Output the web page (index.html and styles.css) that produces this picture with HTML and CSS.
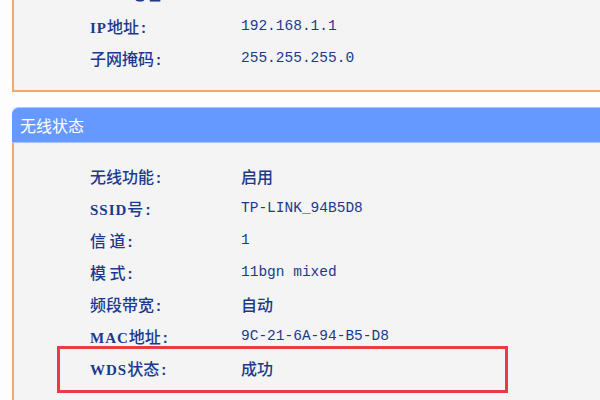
FILE: index.html
```html
<!DOCTYPE html>
<html lang="zh-CN">
<head>
<meta charset="utf-8">
<title>运行状态</title>
<link rel="stylesheet" href="styles.css">
</head>
<body>
<div class="page">
  <section class="panel panel-lan">
    <div class="row"><span class="label"><span class="lat">MAC</span>地址<span class="colon">:</span></span><span class="value mono">9C-21-6A-94-B5-D8</span></div>
    <div class="row"><span class="label"><span class="lat">IP</span>地址<span class="colon">:</span></span><span class="value mono">192.168.1.1</span></div>
    <div class="row"><span class="label">子网掩码<span class="colon">:</span></span><span class="value mono">255.255.255.0</span></div>
  </section>

  <section class="panel panel-wlan">
    <header class="panel-title">无线状态</header>
    <div class="panel-body">
      <div class="row"><span class="label">无线功能<span class="colon">:</span></span><span class="value">启用</span></div>
      <div class="row"><span class="label"><span class="lat">SSID</span>号<span class="colon">:</span></span><span class="value mono">TP-LINK_94B5D8</span></div>
      <div class="row"><span class="label">信&nbsp;道<span class="colon">:</span></span><span class="value mono">1</span></div>
      <div class="row"><span class="label">模&nbsp;式<span class="colon">:</span></span><span class="value mono">11bgn mixed</span></div>
      <div class="row"><span class="label">频段带宽<span class="colon">:</span></span><span class="value">自动</span></div>
      <div class="row"><span class="label"><span class="lat">MAC</span>地址<span class="colon">:</span></span><span class="value mono">9C-21-6A-94-B5-D8</span></div>
      <div class="row row-marked"><span class="label"><span class="lat">WDS</span>状态<span class="colon">:</span></span><span class="value">成功</span></div>
    </div>
  </section>
</div>
</body>
</html>
```

FILE: styles.css
```css
html, body {
  margin: 0;
  padding: 0;
  background: #fdfdfd;
  overflow: hidden;
}

body {
  width: 600px;
  height: 400px;
  font-family: "Noto Sans CJK SC", "Noto Sans", sans-serif;
  font-size: 16px;
  color: #1b3a8e;
}

.page {
  display: flex;
  flex-direction: column;
  gap: 15px;
  margin-left: 12px;
}

.panel {
  background: #f4f4f4;
  border-left: 2px solid #f2a869;
}

/* LAN block: its top runs past the top of the window */
.panel-lan {
  margin-top: -24px;
  padding: 0 0 16px 76px;
  border-bottom: 2px solid #f2a869;
}

.panel-lan .row:first-child {
  height: 34px;
}

.panel-wlan {
  border-left: none;
}

.panel-title {
  height: 34px;
  line-height: 34px;
  padding-left: 8px;
  background: #6699ff;
  border-top: 1px solid #a9c4ff;
  border-bottom: 1px solid #a9c4ff;
  border-top-left-radius: 7px;
  color: #ffffff;
  font-size: 16px;
}

.panel-body {
  border-left: 2px solid #f2a869;
  padding: 17px 0 20px 76px;
}

.row {
  display: flex;
  align-items: center;
  height: 32px;
}

.label {
  width: 151px;
  flex: none;
  white-space: pre;
  font-weight: 500;
}

.lat {
  font-family: "Liberation Serif", serif;
  font-weight: 700;
  font-size: 15px;
  letter-spacing: 1px;
}

.colon {
  font-family: "Liberation Mono", monospace;
  font-weight: 700;
  font-size: 15px;
}

.value {
  white-space: pre;
  font-weight: 500;
}

.mono {
  font-family: "Liberation Mono", monospace;
  font-weight: 400;
  font-size: 14.5px;
}

/* red annotation frame around the WDS line */
.row-marked {
  position: relative;
}

.row-marked::after {
  content: "";
  position: absolute;
  left: -33px;
  top: -6px;
  width: 445px;
  height: 41px;
  border: 3px solid #ec3a44;
}
```
